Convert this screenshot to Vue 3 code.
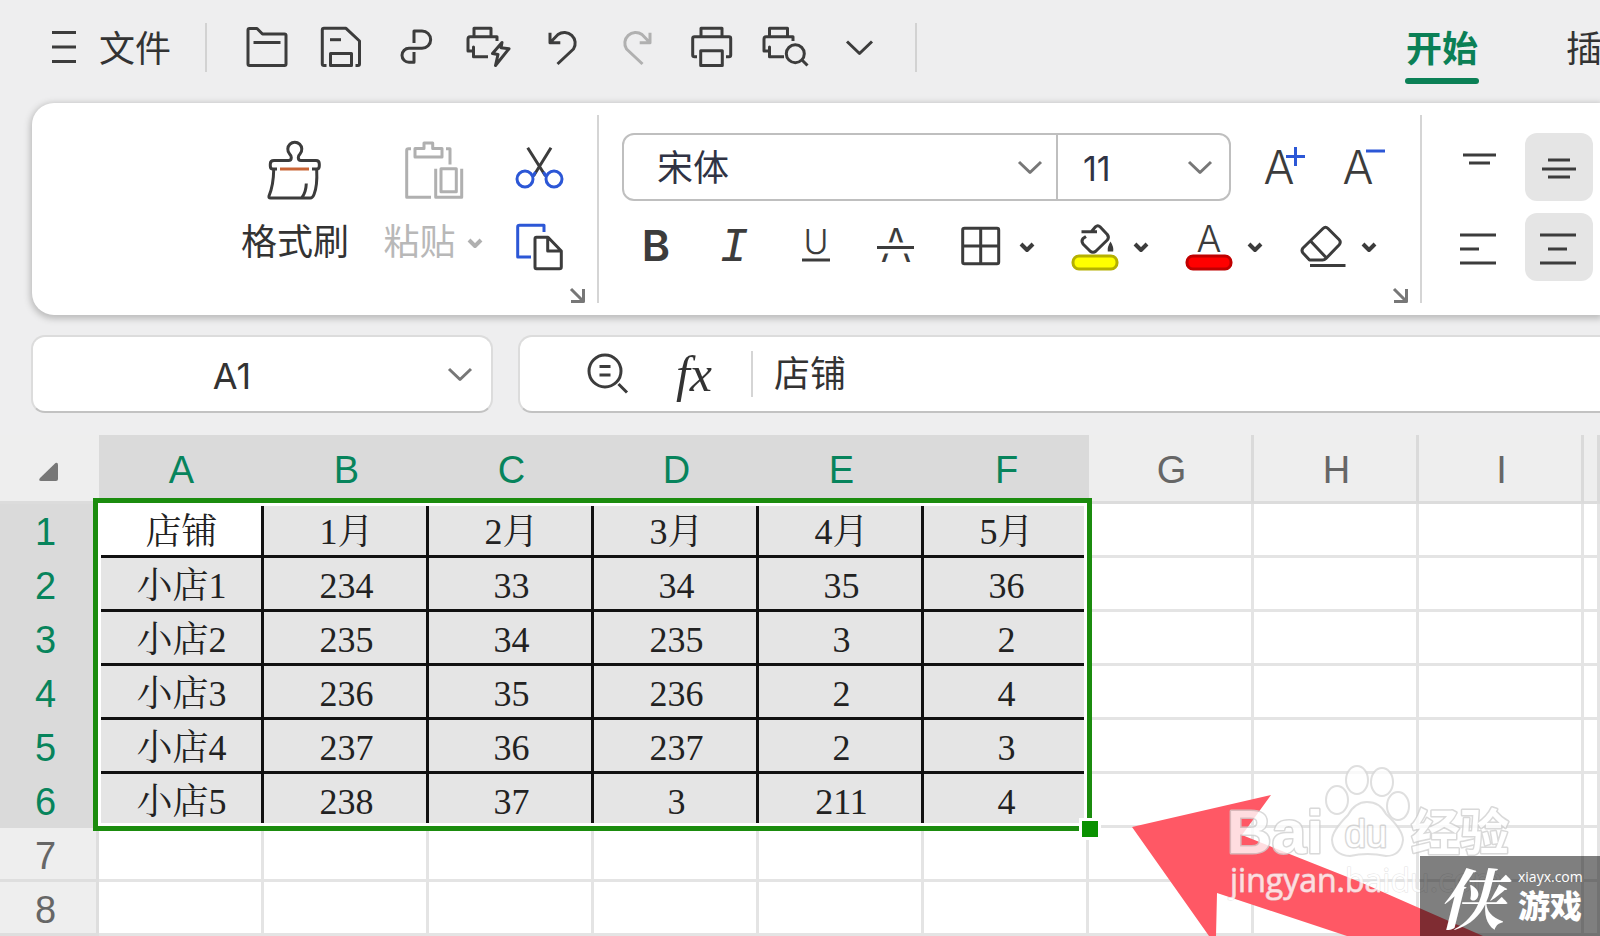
<script setup>
import { ref } from 'vue'

const printer = 'M32 18V13.7H5Q3 13.7 3 16V28H8.5V24V33.7H23'

const quickTools = [
  {
    label: '打开',
    paths: [
      'M5 41V7Q5 5.5 6.5 5.5H14L19.5 11H41.5Q43 11 43 12.5V41Q43 42.5 41.5 42.5H6.5Q5 42.5 5 41Z',
      'M10.5 19.5H37.5'
    ]
  },
  {
    label: '保存',
    paths: [
      'M9.5 42.5H7Q5.3 42.5 5.3 41V7Q5.3 5.3 7 5.3H29L42.5 18V41Q42.5 42.5 41 42.5H38.5',
      'M13.5 42.5V30.5H34.5V42.5Z',
      'M13 16.7H24'
    ]
  },
  { label: '输出为PDF', paths: ['M23 20V8H31A8.6 8.6 0 0 1 31 25.3H18A7 7 0 0 0 18 39.3H23V29'] },
  {
    label: '快速打印',
    paths: ['M9 13.7V5.3H26V13.7', printer, 'M37 19.5L27.5 30.5L33 31.5L30.5 42.5L44 25.7L36 24.7Z']
  },
  { label: '撤销', paths: ['M11 9.7V19.7H21.3M11 19.7L19 11.5A10.8 10.8 0 0 1 34.5 26L18.5 41'] },
  {
    label: '恢复',
    disabled: true,
    paths: ['M37 9.7V19.7H26.7M37 19.7L29 11.5A10.8 10.8 0 0 0 13.5 26L29.5 41']
  },
  {
    label: '打印',
    paths: [
      'M14 13.7V5.3H35V13.7',
      'M10 33.7H7.5Q5.7 33.7 5.7 32V15.5Q5.7 13.7 7.5 13.7H42Q43.7 13.7 43.7 15.5V32Q43.7 33.7 42 33.7H39',
      'M13.7 42.5V27.7H35.3V42.5Z'
    ]
  },
  {
    label: '打印预览',
    paths: ['M8.5 13.7V5.3H26.5V13.7', printer, 'M43.3 30.7A9 9 0 1 1 25.3 30.7A9 9 0 1 1 43.3 30.7M41 37L46.5 42.5']
  },
  { label: '更多', paths: ['M12 18.5L24.5 30.5L37 18.5'] }
]

const aligns = [
  { label: '顶端对齐', d: 'M19 22H52M25 30H46' },
  { label: '垂直居中', d: 'M23 27H45M17 36H51M23 44H45', active: true },
  { label: '左对齐', d: 'M16 22H52M16 36H35M16 50H52' },
  { label: '水平居中', d: 'M15 22H51M23 36H42M15 50H51', active: true }
]

const fontName = ref('宋体')
const fontSize = ref('11')
const cellName = ref('A1')
const formula = ref('店铺')

const columns = ['A', 'B', 'C', 'D', 'E', 'F', 'G', 'H', 'I', '']
const rows = [
  ['店铺', '1月', '2月', '3月', '4月', '5月'],
  ['小店1', '234', '33', '34', '35', '36'],
  ['小店2', '235', '34', '235', '3', '2'],
  ['小店3', '236', '35', '236', '2', '4'],
  ['小店4', '237', '36', '237', '2', '3'],
  ['小店5', '238', '37', '3', '211', '4'],
  [],
  []
]
const inSelection = (r, c) => r < 6 && c < 6
</script>

<template>
  <div class="app">
    <header class="titlebar">
      <button class="file">
        <svg width="26" height="36" viewBox="0 0 26 36" aria-hidden="true"><path d="M1 3.5H25M1 18H25M1 32.5H25" /></svg>
        <span>文件</span>
      </button>
      <i class="bar"></i>
      <div class="quick">
        <button v-for="t in quickTools" :key="t.label" :aria-label="t.label" :class="{ dim: t.disabled }" :disabled="t.disabled">
          <svg width="48" height="48" viewBox="0 0 48 48"><path v-for="p in t.paths" :key="p" :d="p" /></svg>
        </button>
      </div>
      <i class="bar"></i>
      <nav class="tabs">
        <a href="#start" class="current">开始</a>
        <a href="#insert">插</a>
      </nav>
    </header>

    <section class="ribbon">
      <div class="group clip">
        <button class="big">
          <svg width="60" height="60" viewBox="0 0 60 60">
            <path d="M12 28H8Q5.3 28 5.3 25V23Q5.3 19.5 9 19.5H23.5Q26.3 19.5 26.3 16.5Q26.3 14.5 24.5 12.8A7 7 0 1 1 35.1 12.8Q33.3 14.5 33.3 16.5Q33.3 19.5 36 19.5H51Q54.3 19.5 54.3 23V25Q54.3 28 51.5 28H47" />
            <path d="M8.7 29Q8.5 44 4 55Q3.5 57 5.5 57H45.5Q47.5 57 49 53.5Q52.5 45 51.7 29M41.3 42.5Q41 51 37 56.5" />
            <path class="orange" d="M15 28H44" />
          </svg>
          <span>格式刷</span>
        </button>
        <button class="big dim" disabled>
          <svg width="60" height="60" viewBox="0 0 60 60">
            <path d="M12 16V7.5H21V2H29.7V7.5H39V16ZM8 7.7H5.5Q3.7 7.7 3.7 9.500V56.3H28M43 7.7H47V23.500M32.7 27.7V56.3H58.7V27.7M38 27.7H53.3V50.7H38Z" />
          </svg>
          <span>粘贴 <svg class="mini" width="16" height="11" viewBox="0 0 16 11"><path d="M2 2L8 8L14 2" /></svg></span>
        </button>
        <div class="stack">
          <button aria-label="剪切">
            <svg width="48" height="48" viewBox="0 0 48 48">
              <path d="M11.7 3.7L29.5 32M35 3.7L17.5 32" />
              <path class="blue" d="M17 35A8 8 0 1 1 1 35A8 8 0 1 1 17 35ZM46 35A8 8 0 1 1 30 35A8 8 0 1 1 46 35ZM16.5 33L19.5 28M30.5 33L27.5 28" />
            </svg>
          </button>
          <button aria-label="复制">
            <svg width="48" height="48" viewBox="0 0 48 48">
              <path class="blue" d="M28 9V2.3H3.5Q1.7 2.3 1.7 4V34H15" />
              <path d="M19 16Q19 14.3 20.5 14.3H32L45.3 28V44Q45.3 45.7 43.5 45.7H20.5Q19 45.7 19 44ZM31.7 14.3V28H45.3" />
            </svg>
          </button>
        </div>
        <button class="launch" aria-label="剪贴板设置"><svg width="15" height="15" viewBox="0 0 15 15"><path d="M1 1L13 13M13.5 1V13.5H1" /></svg></button>
      </div>

      <div class="group font">
        <div class="line">
          <div class="combo">
            <label class="pick name">
              <select v-model="fontName" aria-label="字体"><option>宋体</option></select>
              <svg width="26" height="15" viewBox="0 0 26 15"><path d="M2 2L13 12.5L24 2" /></svg>
            </label>
            <label class="pick size">
              <select v-model="fontSize" aria-label="字号"><option>11</option></select>
              <svg width="26" height="15" viewBox="0 0 26 15"><path d="M2 2L13 12.5L24 2" /></svg>
            </label>
          </div>
          <button class="grow" aria-label="增大字号">
            <svg width="48" height="48" viewBox="0 0 48 48"><text x="17" y="41" font-size="46">A</text><path class="blue" d="M24 13.5H43M33.5 4V23" /></svg>
          </button>
          <button aria-label="减小字号">
            <svg width="48" height="48" viewBox="0 0 48 48"><text x="17" y="41" font-size="46">A</text><path class="blue" d="M25 8H44" /></svg>
          </button>
        </div>
        <div class="line tools">
          <div class="styles">
            <button aria-label="加粗"><svg width="48" height="48" viewBox="0 0 48 48"><text class="bold" x="24" y="39" font-size="43">B</text></svg></button>
            <button aria-label="倾斜"><svg width="48" height="48" viewBox="0 0 48 48"><text class="slant" x="22" y="39" font-size="48">I</text></svg></button>
            <button aria-label="下划线"><svg width="48" height="48" viewBox="0 0 48 48"><text x="24" y="32" font-size="34">U</text><path d="M10 38H38" /></svg></button>
            <button aria-label="删除线"><svg width="48" height="48" viewBox="0 0 48 48"><text x="24" y="40" font-size="46">A</text><path class="gap" d="M4 26H44" /><path d="M5 25.5H42" /></svg></button>
          </div>
          <div class="splits">
            <div class="split">
              <button aria-label="边框"><svg width="48" height="48" viewBox="0 0 48 48"><path d="M7.5 6.3H40Q41.7 6.3 41.7 8V40Q41.7 41.7 40 41.7H7.5Q5.7 41.7 5.7 40V8Q5.7 6.3 7.5 6.3ZM23.7 6.3V41.7M5.7 24H41.7" /></svg></button>
              <button class="more" aria-label="边框选项"><svg width="16" height="11" viewBox="0 0 16 11"><path d="M2 2L8 8L14 2" /></svg></button>
            </div>
            <div class="split">
              <button aria-label="填充颜色">
                <svg width="48" height="48" viewBox="0 0 48 48">
                  <path d="M10.5 9.7H26M20.5 9.5L24.5 4.8Q26.8 2.5 29 4.8L36.3 12.5Q38.5 15.5 36.3 18L25 29Q22 31.5 19 29L12 22Q10 19 12 16.5L15 14.5" />
                  <path class="drop" d="M39.5 19.5Q36 25 36.8 29.5H42.2Q43 25 39.5 19.5Z" />
                  <rect class="yellow" x="2" y="34" width="44" height="13" rx="6" />
                </svg>
              </button>
              <button class="more" aria-label="填充颜色选项"><svg width="16" height="11" viewBox="0 0 16 11"><path d="M2 2L8 8L14 2" /></svg></button>
            </div>
            <div class="split">
              <button aria-label="字体颜色">
                <svg width="48" height="48" viewBox="0 0 48 48"><text x="24" y="30" font-size="37">A</text><rect class="red" x="2" y="34" width="44" height="13" rx="6" /></svg>
              </button>
              <button class="more" aria-label="字体颜色选项"><svg width="16" height="11" viewBox="0 0 16 11"><path d="M2 2L8 8L14 2" /></svg></button>
            </div>
            <div class="split">
              <button aria-label="清除">
                <svg width="48" height="48" viewBox="0 0 48 48"><path d="M24 6.5Q26.5 4 29 6.5L40 17.5Q42.5 20 40 23L27 36.5Q25.5 38 23.5 38H10.5L4 31Q2 28.5 4 26ZM12 19.5L27.5 36M11 43.5H46.5" /></svg>
              </button>
              <button class="more" aria-label="清除选项"><svg width="16" height="11" viewBox="0 0 16 11"><path d="M2 2L8 8L14 2" /></svg></button>
            </div>
          </div>
        </div>
        <button class="launch" aria-label="字体设置"><svg width="15" height="15" viewBox="0 0 15 15"><path d="M1 1L13 13M13.5 1V13.5H1" /></svg></button>
      </div>

      <div class="align">
        <button v-for="a in aligns" :key="a.label" :aria-label="a.label" :class="{ active: a.active }">
          <svg width="68" height="68" viewBox="0 0 68 68"><path :d="a.d" /></svg>
        </button>
      </div>
    </section>

    <section class="formula">
      <div class="namebox">
        <input v-model="cellName" aria-label="名称框" />
        <button aria-label="名称列表"><svg width="26" height="15" viewBox="0 0 26 15"><path d="M2 2L13 12.5L24 2" /></svg></button>
      </div>
      <div class="entry">
        <button aria-label="查找"><svg width="42" height="42" viewBox="0 0 42 42"><path d="M34 18A16 16 0 1 1 2 18A16 16 0 1 1 34 18ZM31.5 31L40 39.5M12.5 13.5H23.5M12.5 22H23.5" /></svg></button>
        <button class="fx" aria-label="插入函数">fx</button>
        <i></i>
        <input v-model="formula" aria-label="编辑栏" />
      </div>
    </section>

    <main class="sheet">
      <table>
        <colgroup>
          <col class="numcol" />
          <col v-for="n in 9" :key="n" class="datacol" />
          <col />
        </colgroup>
        <thead>
          <tr>
            <th class="corner"><svg width="20" height="20" viewBox="0 0 20 20"><path d="M16.5 1Q19 0 19 3V17Q19 19 17 19H2Q-1 19 1 16Z" /></svg></th>
            <th v-for="(c, i) in columns" :key="i" scope="col" :class="{ on: i < 6 }">{{ c }}</th>
          </tr>
        </thead>
        <tbody>
          <tr v-for="(row, r) in rows" :key="r">
            <th scope="row" :class="{ on: r < 6 }">{{ r + 1 }}</th>
            <td v-for="(c, i) in columns" :key="i" :class="{ sel: inSelection(r, i), first: r === 0 && i === 0 }">{{ row[i] }}</td>
          </tr>
        </tbody>
      </table>
      <div class="selection"><span></span></div>
    </main>

    <svg class="overlay" width="468" height="172" viewBox="1132 764 468 172" aria-hidden="true">
      <path class="arrow" d="M1132 827L1271 795L1242 835L1360 882L1483 936H1347L1217 893L1216 936H1209Z" />
      <g class="mark">
        <text class="brand" x="1227" y="853" font-size="62">Bai</text>
        <ellipse cx="1337" cy="800" rx="11" ry="14" />
        <ellipse cx="1357" cy="780" rx="11" ry="14" />
        <ellipse cx="1382" cy="782" rx="11" ry="14" />
        <ellipse cx="1398" cy="806" rx="11" ry="14" />
        <path d="M1367 802Q1380 802 1386 814Q1403 830 1403 840Q1401 856 1386 856Q1367 852 1350 856Q1333 855 1332 840Q1332 831 1348 815Q1355 802 1367 802Z" />
        <text class="du" x="1366" y="847" font-size="38">du</text>
        <text class="brand" x="1411" y="850" font-size="49">经验</text>
        <text class="url" x="1230" y="892" font-size="32">jingyan.baidu.com</text>
      </g>
    </svg>
    <aside class="stamp">
      <b>侠</b>
      <div><span>xiayx.com</span><strong>游戏</strong></div>
    </aside>
  </div>
</template>

<style>
body { margin: 0; }
</style>

<style scoped>
.app {
  position: relative;
  min-height: 100vh;
  overflow: hidden;
  background: #eeeeef;
  color: #333;
  font-family: "Liberation Sans", "Noto Sans CJK SC", sans-serif;
  font-size: 36px;
}
* { box-sizing: border-box; }
button, input, select {
  margin: 0;
  padding: 0;
  border: 0;
  background: none;
  color: inherit;
  font: inherit;
  appearance: none;
  outline: none;
}
button { display: flex; align-items: center; justify-content: center; flex: none; }
svg { display: block; flex: none; overflow: visible; fill: none; stroke: #3c3c3c; stroke-width: 3; stroke-linejoin: round; }
svg text { fill: #3c3c3c; stroke: none; font-family: Inter, sans-serif; font-weight: 300; text-anchor: middle; }
svg .bold { font-weight: 600; }
svg .slant { font-family: "Liberation Mono", monospace; font-style: italic; font-weight: 400; }
svg .gap { stroke: #fff; stroke-width: 11; }
svg .orange { stroke: #c96435; }
svg .blue { stroke: #2c57d6; }
svg .drop { fill: #3c3c3c; stroke: none; }
svg .yellow { fill: #ff0; stroke: #b5b000; }
svg .red { fill: #f00; stroke: #c00000; }
.dim { color: #b8b8b8; }
.dim svg { stroke: #b0b0b0; }

.titlebar { display: flex; align-items: center; height: 103px; padding: 0 0 9px 51px; }
.file { gap: 22px; line-height: 48px; white-space: nowrap; }
.file span { padding-top: 5px; }
.bar { flex: none; width: 2px; height: 49px; margin: 0 23px 0 34px; background: #d2d2d2; }
.quick { display: flex; flex: none; }
.quick button { width: 74px; height: 48px; }
.quick + .bar { margin-left: 19px; }
.tabs { display: flex; gap: 86px; width: 195px; margin-left: auto; padding-top: 16px; overflow: hidden; white-space: nowrap; }
.tabs a { position: relative; flex: none; padding: 0 1px 10px; color: #333; line-height: 52px; text-decoration: none; }
.tabs .current { color: #0b8056; font-weight: 700; }
.tabs .current::after { content: ""; position: absolute; right: 0; bottom: 2px; left: 0; height: 6px; border-radius: 3px; background: #0b8056; }

.ribbon {
  display: flex;
  margin-left: 32px;
  padding: 12px 0;
  border-radius: 22px 0 0 22px;
  background: #fff;
  box-shadow: 0 2px 6px 2px #bdbdbd;
}
.group { position: relative; flex: none; min-height: 188px; padding-top: 18px; border-right: 2px solid #d5d5d5; }
.clip { display: flex; align-items: flex-start; width: 567px; padding-left: 209px; }
.big { flex-direction: column; gap: 18px; width: 108px; padding-top: 8px; line-height: 48px; white-space: nowrap; }
.big + .big { width: 98px; margin-left: 35px; }
.big span { display: flex; align-items: center; gap: 11px; }
.mini, .more svg { stroke-width: 4; }
.stack { display: flex; flex-direction: column; gap: 31px; margin: 11px 0 0 34px; }
.launch { position: absolute; right: 12px; bottom: 0; }
.launch svg { stroke: #777; }
.font { width: 823px; padding-left: 23px; }
.line { display: flex; align-items: center; height: 68px; }
.combo { display: flex; flex: none; width: 609px; height: 68px; border: 2px solid #bfbfbf; border-radius: 12px; }
.pick { display: flex; align-items: center; color: #303344; }
.pick select { flex: 1; min-width: 0; height: 64px; padding-top: 4px; line-height: 60px; }
.pick svg, .namebox svg { stroke: #777; pointer-events: none; }
.name { width: 434px; padding: 0 13px 0 33px; border-right: 2px solid #bfbfbf; }
.size { flex: 1; padding: 0 16px 0 25px; font-family: Inter, sans-serif; font-size: 34px; }
.grow { margin: 0 31px; }
.tools { margin-top: 11px; padding-left: 10px; }
.styles { display: flex; gap: 32px; }
.splits { display: flex; gap: 22px; margin-left: 37px; }
.split { display: flex; }
.more { width: 44px; padding-top: 3px; }
.align { display: grid; grid-template-columns: 68px 68px; gap: 12px 13px; padding: 18px 0 0 22px; align-content: start; }
.align button { height: 68px; border-radius: 12px; }
.align .active { background: #e5e5e5; }

.formula { display: flex; gap: 25px; margin: 20px 0 22px 31px; }
.namebox, .entry {
  display: flex;
  align-items: center;
  height: 78px;
  border: 2px solid #dcdcdc;
  border-bottom-color: #c2c2c2;
  border-radius: 14px;
  background: #fff;
}
.namebox { flex: none; width: 462px; padding-right: 18px; }
.namebox input { flex: 1; min-width: 0; padding-right: 16px; padding-top: 4px; font-family: Inter, sans-serif; text-align: center; }
.entry { flex: 1; min-width: 0; padding-left: 67px; border-right: 0; border-radius: 14px 0 0 14px; }
.fx { width: 46px; margin-left: 42px; font: italic 50px/60px "Liberation Serif", serif; }
.entry i { width: 2px; height: 46px; margin: 0 21px 0 34px; background: #d5d5d5; }
.entry input { flex: 1; min-width: 0; height: 60px; padding-bottom: 6px; }

.sheet { position: relative; }
table { width: 100%; table-layout: fixed; border-spacing: 0; background: #fff; }
.numcol { width: 99px; }
.datacol { width: 165px; }
th { padding: 0; background: #eee; color: #666; font-size: 38px; font-weight: 400; }
thead th { height: 69px; padding: 5px 0 0 3px; border-right: 3px solid #dadada; border-bottom: 3px solid #dcdcdc; }
tbody th { height: 54px; padding: 5px 5px 0 0; border-right: 3px solid #dedede; border-bottom: 3px solid #dedede; line-height: 44px; }
thead .on { background: #dadada; color: #07845c; }
tbody .on { border-color: #dadada; background: #dadada; color: #07845c; }
thead .corner { border-right-color: #eee; }
.corner svg { margin: 3px 0 0 36px; fill: #777; stroke: none; }
td {
  height: 54px;
  padding: 5px 0 0 3px;
  border-right: 3px solid #e4e4e4;
  border-bottom: 3px solid #e4e4e4;
  color: #222;
  font-family: "Liberation Serif", "Noto Serif CJK SC", "Noto Sans CJK SC", serif;
  line-height: 44px;
  text-align: center;
}
td.sel { border-color: #111; background: #e5e5e5; }
td.first { background: #fff; }
.selection {
  position: absolute;
  top: 63px;
  left: 93px;
  width: 999px;
  height: 333px;
  border: 5px solid #1b8c0e;
  box-shadow: inset 0 0 0 3px #fff;
}
.selection span { position: absolute; right: -14px; bottom: -14px; width: 22px; height: 22px; border: 3px solid #fff; background: #0a9100; }

.overlay { position: absolute; right: 0; bottom: 0; pointer-events: none; }
.arrow { fill: #ff5865; stroke: none; }
.mark { opacity: 0.8; }
.mark ellipse, .mark path { fill: #fff; stroke: #d8d8d8; stroke-width: 2; }
.mark text { fill: #fff; stroke: #d0d0d0; stroke-width: 3; paint-order: stroke; font-family: "Liberation Sans", "Noto Sans CJK SC", sans-serif; font-weight: 700; text-anchor: start; }
.mark .du { text-anchor: middle; font-weight: 400; }
.mark .url { font-family: "Open Sans", sans-serif; font-weight: 400; stroke: #dcdcdc; stroke-width: 1; }
.stamp {
  position: absolute;
  right: 0;
  bottom: 0;
  display: flex;
  align-items: center;
  gap: 14px;
  width: 180px;
  height: 80px;
  padding-left: 18px;
  background: rgba(0, 0, 0, 0.5);
  color: #fff;
}
.stamp b { font-family: "Noto Serif CJK SC", "Noto Sans CJK SC", serif; font-size: 66px; line-height: 76px; font-style: italic; }
.stamp div { display: flex; flex-direction: column; }
.stamp span { font: 14px/22px "Open Sans", sans-serif; }
.stamp strong { font-size: 32px; line-height: 38px; font-weight: 900; }
</style>
